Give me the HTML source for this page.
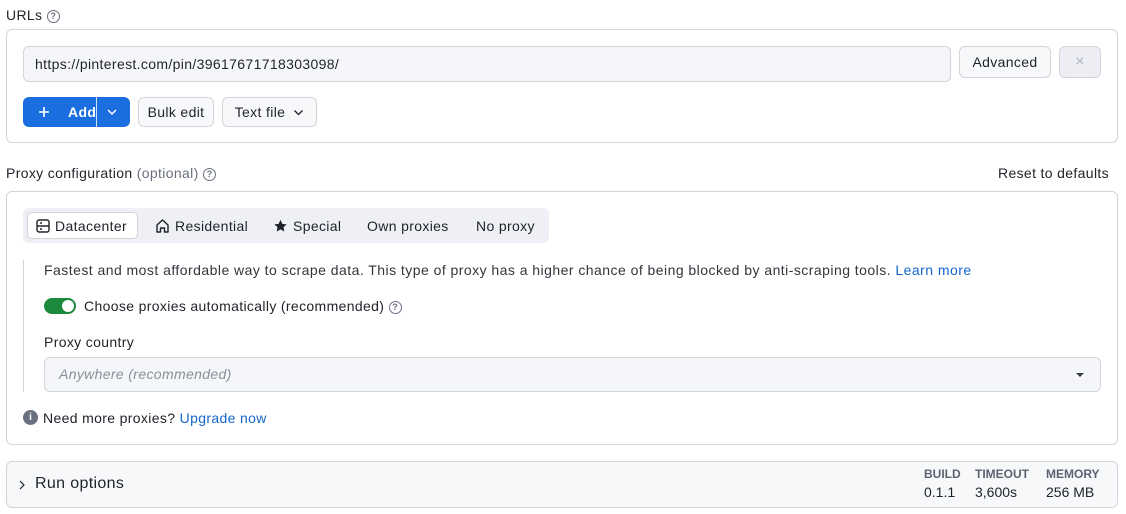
<!DOCTYPE html>
<html><head><meta charset="utf-8"><style>
*{box-sizing:border-box;margin:0;padding:0}
body{width:1126px;height:514px;background:#fff;font-family:"Liberation Sans",sans-serif;font-size:14px;color:#1f2228;position:relative;overflow:hidden;letter-spacing:0.35px}
.a{position:absolute;white-space:nowrap}
.box{position:absolute;border:1px solid #d1d4db;border-radius:6px}
.btn{position:absolute;border:1px solid #d1d4db;border-radius:6px;background:#f7f8fa;display:flex;align-items:center;justify-content:center;font-size:14px}
.q{display:inline-block;width:13px;height:13px;border:1.2px solid #6b7080;border-radius:50%;font-size:9px;line-height:11px;text-align:center;color:#6b7080;vertical-align:1px;letter-spacing:0;font-weight:bold}
.tab{position:absolute;top:212px;height:27px;display:flex;align-items:center;gap:5px}
.link{color:#1466cc}
</style></head><body>
<div class="a" style="left:6px;top:7px">URLs <span class="q">?</span></div>
<div class="box" style="left:6px;top:29px;width:1112px;height:114px"></div>
<div class="a" style="left:23px;top:46px;width:928px;height:36px;border:1px solid #d1d4db;border-radius:6px;background:#f5f6f9;padding-left:11px;line-height:34px">https://pinterest.com/pin/39617671718303098/</div>
<div class="btn" style="left:959px;top:46px;width:92px;height:32px">Advanced</div>
<div class="btn" style="left:1059px;top:46px;width:42px;height:32px;background:#eceef3;color:#b0b4be;font-size:16px">×</div>
<div class="a" style="left:23px;top:97px;width:107px;height:30px;background:#1a6ee0;border-radius:6px;color:#fff;font-weight:bold">
<svg class="a" style="left:15px;top:9px" width="12" height="12" viewBox="0 0 12 12"><path d="M6 1v10M1 6h10" stroke="#fff" stroke-width="1.6"/></svg>
<span class="a" style="left:45px;top:7px">Add</span>
<span class="a" style="left:73px;top:0;width:1px;height:30px;background:#cfe0fa"></span>
<svg class="a" style="left:83px;top:11px" width="12" height="8" viewBox="0 0 12 8"><path d="M2 2l4 4 4-4" stroke="#fff" stroke-width="1.5" fill="none"/></svg>
</div>
<div class="btn" style="left:138px;top:97px;width:76px;height:30px">Bulk edit</div>
<div class="btn" style="left:222px;top:97px;width:95px;height:30px;gap:8px">Text file <svg width="11" height="7" viewBox="0 0 11 7"><path d="M1.5 1.5l4 4 4-4" stroke="#1f2228" stroke-width="1.3" fill="none"/></svg></div>

<div class="a" style="left:6px;top:165px">Proxy configuration <span style="color:#6b7080">(optional)</span> <span class="q">?</span></div>
<div class="a" style="right:17px;top:165px">Reset to defaults</div>
<div class="box" style="left:6px;top:191px;width:1112px;height:254px"></div>
<div class="a" style="left:23px;top:208px;width:526px;height:35px;background:#eef0f5;border-radius:6px"></div>
<div class="a" style="left:27px;top:212px;width:111px;height:27px;background:#fff;border:1px solid #d1d4db;border-radius:5px"></div>
<div class="tab" style="left:36px"><svg width="14" height="14" viewBox="0 0 14 14"><rect x="1" y="1" width="12" height="12" rx="2" stroke="#1f2228" stroke-width="1.4" fill="none"/><path d="M1 7h12M4 4h2M4 10h2" stroke="#1f2228" stroke-width="1.4"/></svg>Datacenter</div>
<div class="tab" style="left:155px"><svg width="15" height="14" viewBox="0 0 15 14"><path d="M2 13V6l5.5-5 5.5 5v7H9.5V9h-4v4z" stroke="#1f2228" stroke-width="1.4" fill="none" stroke-linejoin="round"/></svg>Residential</div>
<div class="tab" style="left:273px"><svg width="15" height="14" viewBox="0 0 24 24"><path d="M12 1.5l3.2 6.9 7.3.8-5.4 5 1.5 7.3L12 17.8l-6.6 3.7 1.5-7.3-5.4-5 7.3-.8z" fill="#1f2228"/></svg>Special</div>
<div class="tab" style="left:367px">Own proxies</div>
<div class="tab" style="left:476px">No proxy</div>
<div class="a" style="left:23px;top:260px;width:1px;height:132px;background:#d1d4db"></div>
<div class="a" style="left:44px;top:262px;color:#33363d;letter-spacing:0.46px">Fastest and most affordable way to scrape data. This type of proxy has a higher chance of being blocked by anti-scraping tools. <span class="link">Learn more</span></div>
<div class="a" style="left:44px;top:298px;width:32px;height:16px;background:#1c8a3c;border-radius:8px"><span class="a" style="left:18px;top:2px;width:12px;height:12px;background:#fff;border-radius:50%"></span></div>
<div class="a" style="left:84px;top:298px">Choose proxies automatically (recommended) <span class="q">?</span></div>
<div class="a" style="left:44px;top:334px">Proxy country</div>
<div class="a" style="left:44px;top:357px;width:1057px;height:35px;border:1px solid #d1d4db;border-radius:6px;background:#f5f6f9;padding-left:14px;line-height:33px;color:#8a8f9c;font-style:italic">Anywhere (recommended)</div>
<svg class="a" style="left:1075px;top:372px" width="10" height="6"><path d="M1 1h8L5 5z" fill="#3a3d45"/></svg>
<div class="a" style="left:23px;top:410px;width:15px;height:15px;border-radius:50%;background:#6b7080;color:#fff;font-size:10px;font-weight:bold;text-align:center;line-height:15px;letter-spacing:0">i</div>
<div class="a" style="left:43px;top:410px">Need more proxies? <span class="link">Upgrade now</span></div>

<div class="a" style="left:6px;top:461px;width:1112px;height:47px;border:1px solid #d1d4db;border-radius:6px;background:#f7f8fa"></div>
<svg class="a" style="left:18px;top:480px" width="8" height="10"><path d="M2 1l4 4-4 4" stroke="#1f2228" stroke-width="1.2" fill="none"/></svg>
<div class="a" style="left:35px;top:475px;font-size:16px">Run options</div>
<div class="a" style="left:924px;top:467px;font-size:12px;font-weight:bold;color:#5d6270;letter-spacing:0">BUILD</div>
<div class="a" style="left:924px;top:484px;letter-spacing:0">0.1.1</div>
<div class="a" style="left:975px;top:467px;font-size:12px;font-weight:bold;color:#5d6270;letter-spacing:0">TIMEOUT</div>
<div class="a" style="left:975px;top:484px;letter-spacing:0">3,600s</div>
<div class="a" style="left:1046px;top:467px;font-size:12px;font-weight:bold;color:#5d6270;letter-spacing:0">MEMORY</div>
<div class="a" style="left:1046px;top:484px;letter-spacing:0">256 MB</div>
</body></html>
